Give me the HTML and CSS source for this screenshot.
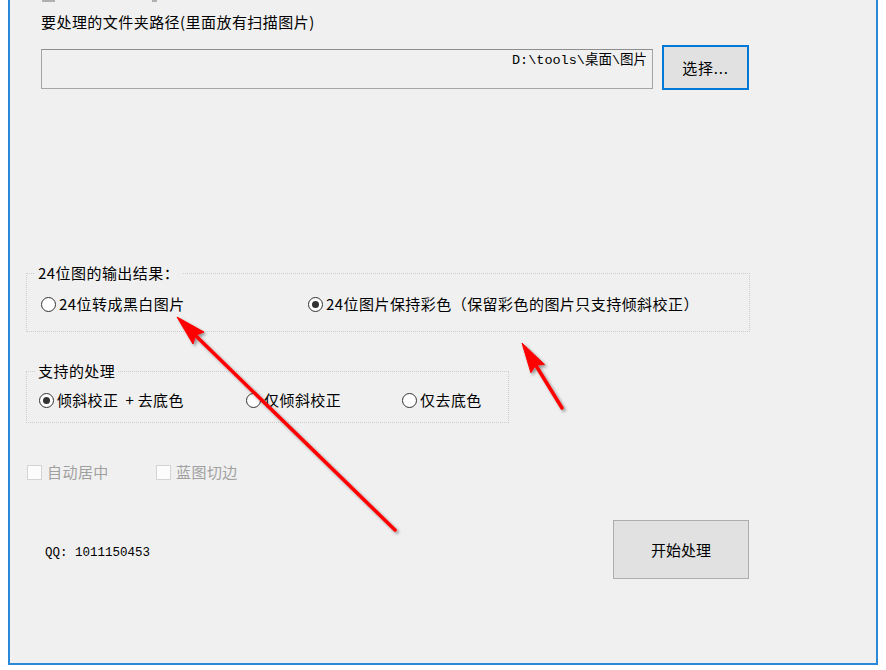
FILE: index.html
```html
<!DOCTYPE html>
<html lang="zh-CN">
<head>
<meta charset="utf-8">
<title>扫描图片处理</title>
<link rel="stylesheet" href="styles.css">
</head>
<body>
<div class="window">
  <div class="cutoff"><span class="cut cut-a"></span><span class="cut cut-b"></span></div>
  <div class="path-label">要处理的文件夹路径(里面放有扫描图片)</div>
  <div class="path-row">
    <div class="path-box">D:\tools\桌面\图片</div>
    <button class="btn btn-select">选择...</button>
  </div>

  <fieldset class="group group-output">
    <legend>24位图的输出结果：</legend>
    <div class="options options-output">
      <label class="opt opt-bw"><span class="radio"></span>24位转成黑白图片</label>
      <label class="opt"><span class="radio checked"></span>24位图片保持彩色（保留彩色的图片只支持倾斜校正）</label>
    </div>
  </fieldset>

  <fieldset class="group group-proc">
    <legend>支持的处理</legend>
    <div class="options options-proc">
      <label class="opt opt-p1"><span class="radio checked"></span><span class="tight">倾斜校正&nbsp; + 去底色</span></label>
      <label class="opt opt-p2"><span class="radio"></span>仅倾斜校正</label>
      <label class="opt"><span class="radio"></span>仅去底色</label>
    </div>
  </fieldset>

  <div class="checks">
    <label class="chk chk-1"><span class="box"></span>自动居中</label>
    <label class="chk"><span class="box"></span>蓝图切边</label>
  </div>

  <div class="bottom">
    <div class="qq">QQ: 1011150453</div>
    <button class="btn btn-start">开始处理</button>
  </div>
</div>

<svg class="arrows" width="886" height="670" viewBox="0 0 886 670" aria-hidden="true">
  <defs>
    <filter id="sh" x="-30%" y="-30%" width="160%" height="160%">
      <feDropShadow dx="2" dy="2" stdDeviation="1.8" flood-color="#000" flood-opacity="0.4"/>
    </filter>
  </defs>
  <g filter="url(#sh)" fill="#f00" stroke="#f00">
    <line x1="395" y1="530" x2="194" y2="334" stroke-width="3.5" stroke-linecap="round"/>
    <polygon points="177,317 204,332 195.6,335.2 193,344" stroke-width="1" stroke-linejoin="round"/>
    <line x1="562" y1="408" x2="535" y2="364" stroke-width="3.5" stroke-linecap="round"/>
    <polygon points="522,343 544.5,364.4 535.6,365.2 530.9,372.8" stroke-width="1" stroke-linejoin="round"/>
  </g>
</svg>
</body>
</html>
```

FILE: styles.css
```css
html, body {
  margin: 0;
  padding: 0;
}

body {
  background: #ffffff;
  font-family: "Noto Sans CJK SC", "Noto Sans", sans-serif;
  font-size: 15px;
  letter-spacing: 0.45px;
  color: #000;
  width: 886px;
  height: 670px;
  overflow: hidden;
}

.window {
  margin-left: 8px;
  width: 870px;
  height: 665px;
  box-sizing: border-box;
  border: 2px solid #2b88d8;
  border-top: 0;
  background: #f0f0f0;
  padding-left: 16px;
  display: flex;
  flex-direction: column;
  align-items: flex-start;
}

.cutoff {
  height: 3px;
  display: flex;
}

.cut {
  display: block;
  height: 2px;
  background: #b0b0b0;
}

.cut-a {
  margin-left: 16px;
  width: 13px;
}

.cut-b {
  margin-left: 97px;
  width: 5px;
}

.path-label {
  margin-top: 10px;
  margin-left: 15px;
  line-height: 18px;
}

.path-row {
  margin-top: 14px;
  margin-left: 15px;
  display: flex;
  gap: 9px;
  align-items: flex-start;
}

.path-box {
  width: 612px;
  height: 40px;
  margin-top: 4px;
  box-sizing: border-box;
  border: 1px solid #a5a5a5;
  border-top-color: #8e8e8e;
  padding: 2px 5px 0 0;
  text-align: right;
  font-family: "Liberation Mono", "Noto Sans CJK SC", monospace;
  font-size: 13.5px;
  letter-spacing: 0;
  line-height: 17px;
}

.btn {
  font: inherit;
  color: #000;
  padding: 0;
  background: #e1e1e1;
  box-sizing: border-box;
  cursor: default;
}

.btn-select {
  width: 87px;
  height: 45px;
  border: 2px solid #0078d7;
  letter-spacing: 0.8px;
}

.group {
  margin: 0;
  padding: 0;
  border: 1px dotted #cdcdcd;
  box-sizing: border-box;
  min-width: 0;
}

.group legend {
  padding: 0 3px;
  margin-left: 8px;
  line-height: 18px;
}

.group-output {
  margin-top: 174px;
  width: 724px;
}

.options {
  display: flex;
  align-items: center;
}

.options-output {
  padding: 13px 0 18px 14px;
}

.group-proc {
  margin-top: 30px;
  width: 483px;
}

.options-proc {
  padding: 11px 0 13px 12px;
}

.opt {
  display: flex;
  align-items: center;
  height: 18px;
  line-height: 18px;
  white-space: nowrap;
}

.tight {
  letter-spacing: 0.3px;
}

.opt-bw {
  width: 267px;
}

.opt-p1 {
  width: 207px;
}

.opt-p2 {
  width: 156px;
}

.radio {
  width: 15px;
  height: 15px;
  box-sizing: border-box;
  border: 1px solid #333;
  border-radius: 50%;
  background: #fff;
  margin-right: 3px;
  display: flex;
  align-items: center;
  justify-content: center;
  flex: none;
}

.radio.checked::after {
  content: "";
  width: 7px;
  height: 7px;
  border-radius: 50%;
  background: #333;
}

.checks {
  margin-top: 40px;
  margin-left: 1px;
  display: flex;
  color: #a0a0a0;
}

.chk {
  display: flex;
  align-items: center;
  height: 18px;
  line-height: 18px;
}

.chk-1 {
  width: 129px;
}

.box {
  width: 15px;
  height: 15px;
  box-sizing: border-box;
  border: 1px solid #d4d4d4;
  background: #fcfcfc;
  margin-right: 5px;
  flex: none;
}

.bottom {
  margin-top: 39px;
  width: 723px;
  display: flex;
  align-items: flex-start;
}

.qq {
  margin-top: 25px;
  margin-left: 19px;
  font-family: "Liberation Mono", monospace;
  font-size: 12.5px;
  letter-spacing: 0;
  line-height: 16px;
}

.btn-start {
  margin-left: auto;
  width: 136px;
  height: 59px;
  border: 1px solid #adadad;
}

.arrows {
  position: absolute;
  top: 0;
  left: 0;
  pointer-events: none;
}
```
